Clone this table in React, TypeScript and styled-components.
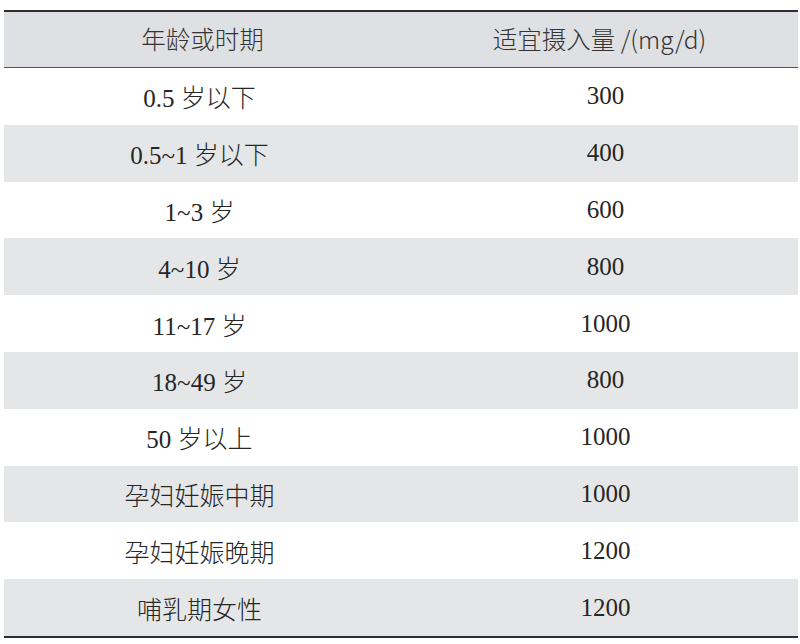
import React from "react";
import styled, { createGlobalStyle } from "styled-components";

const Global = createGlobalStyle`
  html, body { margin: 0; padding: 0; background: #ffffff; }
  body { width: 800px; height: 644px; overflow: hidden; }
`;

const Page = styled.div`
  padding: 10px 2px 0 4px;
`;

const Table = styled.div`
  width: 794px;
  border-top: 2px solid #2e2e2e;
  border-bottom: 2px solid #2e2e2e;
`;

const HeadRow = styled.div`
  display: grid;
  grid-template-columns: 397px 397px;
  height: 55px;
  background: #dfe0e3;
  border-bottom: 1px solid #555;
`;

const HeadCell = styled.div`
  display: flex;
  align-items: center;
  justify-content: center;
  font-family: "Noto Sans CJK SC", "Noto Sans", sans-serif;
  font-size: 24.5px;
  font-weight: 300;
  color: #333333;
  padding-bottom: 2px;
`;

const Row = styled.div<{ $shade: boolean }>`
  display: grid;
  grid-template-columns: 397px 397px;
  height: 56.8px;
  background: ${(p) => (p.$shade ? "#e5e6e8" : "#ffffff")};
`;

const Cell = styled.div<{ $num?: boolean }>`
  display: flex;
  align-items: center;
  justify-content: center;
  font-family: "Liberation Serif", "Noto Sans CJK SC", serif;
  font-size: 25px;
  font-weight: 300;
  color: #262626;
  padding-left: ${(p) => (p.$num ? "12px" : "0")};
  padding-right: ${(p) => (p.$num ? "0" : "6px")};
`;

const rows: [string, string][] = [
  ["0.5 岁以下", "300"],
  ["0.5~1 岁以下", "400"],
  ["1~3 岁", "600"],
  ["4~10 岁", "800"],
  ["11~17 岁", "1000"],
  ["18~49 岁", "800"],
  ["50 岁以上", "1000"],
  ["孕妇妊娠中期", "1000"],
  ["孕妇妊娠晚期", "1200"],
  ["哺乳期女性", "1200"],
];

export default function App() {
  return (
    <Page>
      <Global />
      <Table>
        <HeadRow>
          <HeadCell>年龄或时期</HeadCell>
          <HeadCell>适宜摄入量 /(mg/d)</HeadCell>
        </HeadRow>
        {rows.map(([a, b], i) => (
          <Row key={i} $shade={i % 2 === 1}>
            <Cell>{a}</Cell>
            <Cell $num>{b}</Cell>
          </Row>
        ))}
      </Table>
    </Page>
  );
}
